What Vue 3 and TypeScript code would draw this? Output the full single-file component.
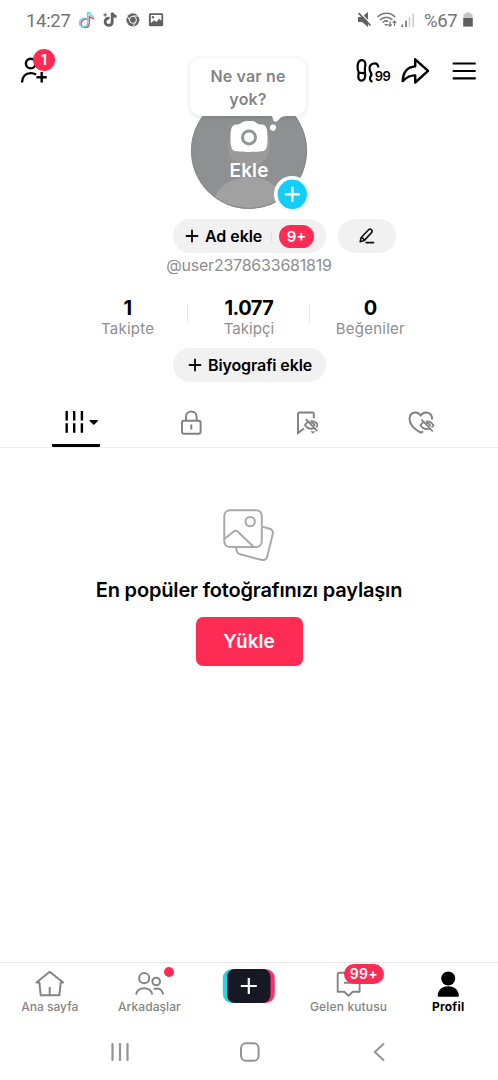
<script setup lang="ts">
interface Stat { value: string; label: string; tracking: string }

const stats: Stat[] = [
  { value: '1', label: 'Takipte', tracking: '0.25px' },
  { value: '1.077', label: 'Takipçi', tracking: '0.05px' },
  { value: '0', label: 'Beğeniler', tracking: '0.25px' },
]
</script>

<template>
  <main class="screen">
    <header class="status">
      <span class="clock">14:27</span>
      <svg class="status-apps" width="86" height="20" viewBox="79 10 86 20">
        <g fill="none" stroke-width="1.500">
          <path d="M86.500 18.200c-7-.4-8.200 8.600-2 8.600 2.900 0 4.200-2 4.200-4.500v-6.500c1.400 1.300 2.800 1.900 4.800 2" stroke="#e8506d" transform="translate(.6 .8)" />
          <path d="M85.500 18.200c-7-.4-8.200 8.600-2 8.600 2.900 0 4.200-2 4.200-4.500V12.700h2c.3 2.200 1.700 3.600 4.100 3.800" stroke="#5edbe0" />
        </g>
        <path d="M109.500 18.200c-5.600-.5-5.800 7.200-.8 7.200 2.400 0 3.500-1.500 3.500-3.700v-8.900c.5 2.500 1.900 3.700 4.300 3.900" fill="none" stroke="#606060" stroke-width="2.800" />
        <path d="M105.200 12.300l.7 1.900 1.900.7-1.900.7-.7 1.900-.7-1.900-1.900-.7 1.900-.7z" fill="#606060" />
        <circle cx="132.900" cy="19.800" r="6.600" fill="#666" />
        <path d="M127.200 16.400l3.200 5M133 16h6M136.200 21.500l-3.300 5.200" stroke="#fff" stroke-width=".9" />
        <circle cx="132.900" cy="19.800" r="3.500" fill="#666" stroke="#fff" stroke-width=".9" />
        <path fill-rule="evenodd" d="M150.400 13.200h11.300c.9 0 1.500.6 1.500 1.500v10c0 .9-.6 1.500-1.500 1.500h-11.300c-.9 0-1.500-.6-1.500-1.500v-10c0-.9.6-1.500 1.500-1.500zM150.800 15v8.200l3.300-3 2.300 1.800 2.700-3.300 2.300 2V15z" fill="#606060" />
        <circle cx="153" cy="17.200" r="1.200" fill="#606060" />
      </svg>
      <svg class="status-signal" width="59" height="20" viewBox="357 10 59 20">
        <path d="M358 17h4l6-5v15l-6-5h-4z" fill="#606060" />
        <path d="M359.500 12l12.500 13" stroke="#fff" stroke-width="1.200" />
        <path d="M358.500 13l12 12.500" stroke="#606060" stroke-width="1.800" />
        <g fill="none" stroke="#777" stroke-width="1.600">
          <path d="M377.500 17c5-5 13-5 17.500 0M380 20c4-3.700 9-3.700 12.500 0M382.700 22.500c1.800-1.800 3.600-2 5.300-1" />
          <path d="M390 21.200v5m-1.800-1.700 1.800 1.700 1.800-1.700M394.500 26v-5m-1.800 1.700 1.800-1.700 1.800 1.700" stroke-width="1.200" />
        </g>
        <path d="M384.200 24h4l-2 2.200z" fill="#777" />
        <path d="M402.200 24.500V27M406 20.500V27" stroke="#666" stroke-width="1.500" />
        <path d="M409.500 17V27M413.200 13.500V27" stroke="#ccc" stroke-width="1.500" />
      </svg>
      <span class="percent">%67</span>
      <svg width="10" height="16" viewBox="0 0 10 16"><path d="M2.800 1.700V.5h4.400v1.200H9.500V6h-9V1.700z" fill="#c5c5c5" /><path d="M.2 6h9.600v8.600H.2z" fill="#606060" /></svg>
    </header>

    <section class="hero">
      <button class="friends" aria-label="Arkadaş ekle">
        <svg width="30" height="30" viewBox="20 56 30 30" fill="none" stroke="#000" stroke-width="2.400">
          <circle cx="30.700" cy="63.600" r="4.800" />
          <path d="M22 82.500c.3-6 3.700-9.400 8.700-9.400 2 0 3.800.5 5.400 1.500M36.500 77.200h10.200M41.700 72v10.400" />
        </svg>
        <span class="count">1</span>
      </button>

      <div class="avatar">
        <svg width="118" height="118" viewBox="190 92 118 118">
          <defs><clipPath id="face"><circle cx="249" cy="150.800" r="58" /></clipPath></defs>
          <g clip-path="url(#face)">
            <path d="M190 92h118v118H190z" fill="#8e9092" />
            <circle cx="249" cy="146" r="21" fill="#9b9b9b" />
            <ellipse cx="249" cy="208" rx="37" ry="31" fill="#a1a1a1" />
          </g>
          <circle cx="249" cy="150.800" r="57.600" fill="none" stroke="#87898b" />
          <path d="M236 124.500c3.200 0 4.200-.6 5.700-1.800 1.500-1.200 3-1.700 7.300-1.700s5.800.5 7.300 1.700 2.500 1.800 5.700 1.800c3.700.4 5.500 3 5.500 12.500 0 8.500-.5 13-4.300 14-5 1.200-23.400 1.200-28.400 0-3.800-1-4.300-5.500-4.300-14 0-9.500 1.800-12.100 5.500-12.500z" fill="#fff" />
          <circle cx="249" cy="137.400" r="6.500" fill="#fff" stroke="#929496" stroke-width="3" />
        </svg>
        <span class="ekle">Ekle</span>
        <div class="bubble">Ne var ne<br>yok?</div>
        <svg class="tail" width="20" height="18" viewBox="268 114 20 18" fill="#fff"><path d="M269 114h18v2c-4 .3-6 .8-8 3.300-1.800 2.900-4.700 3-5.700 1-.7-2-.3-3.300-2.300-4.300z" /><circle cx="273" cy="127.600" r="3.100" /></svg>
        <svg class="plus" width="36" height="36" viewBox="0 0 36 36"><circle cx="18" cy="18" r="18" fill="#fff" /><circle cx="18.300" cy="18.300" r="14.700" fill="#13cef8" /><path d="M10.800 18.300h15M18.300 10.800v15" stroke="#fff" stroke-width="2.400" /></svg>
      </div>

      <svg class="actions" width="124" height="32" viewBox="354 56 124 32" fill="none" stroke="#000" stroke-width="2.200">
        <path d="M362 60.200c2.800.1 3.900 2.700 3.200 6-.8 3.300-.3 5 0 8.200.3 4-1.300 6.300-3.900 6.200-2.500-.1-3.200-2.300-2.900-5.200l.3-3c-1.100-2.300-1.400-4.500-1-7.200.5-3.400 1.900-5.100 4.300-5zM358.500 72.600l6.500.8" />
        <path d="M378.300 67.500c0-2.800-1.600-4.300-4.200-4-3.800.4-5.200 3.200-4.400 6.500.6 2.400 2 3.200 1.700 5-.2 1.300-1.400 1.500-1.400 3 0 2.200.7 3.600 2.600 3.500" />
        <text x="374.800" y="81" class="views">99</text>
        <path d="M415.200 59.300l12.900 11.600-12.900 11.600v-7.100c-5.100-.2-8.400 1.500-12.500 5.700.4-8.600 4.300-14.100 12.500-14.700z" stroke-width="2.400" stroke-linejoin="round" />
        <path d="M452.700 63.500h23M452.700 71h23M452.700 78.300h23" stroke-width="2.200" />
      </svg>
    </section>

    <section class="name-row">
      <button class="pill name-pill">
        <svg width="14" height="14" viewBox="0 0 14 14" stroke="#111" stroke-width="1.900"><path d="M.8 7h12.400M7 .8v12.400" /></svg>
        <span class="add-name">Ad ekle</span>
        <i class="split"></i>
        <span class="nine">9+</span>
      </button>
      <button class="pill edit-pill" aria-label="Düzenle">
        <svg width="18" height="18" viewBox="0 0 18 18" fill="none" stroke="#111" stroke-width="1.600" stroke-linejoin="round"><path d="M2.200 14.800l.8-4 7.600-8c1.800-1.800 4.700.7 2.900 2.800l-7.300 8zM3.200 10.700c1.500 0 2.600 1.200 2.800 2.700M7.500 15.600h8.700" /></svg>
      </button>
    </section>
    <p class="handle">@user2378633681819</p>

    <section class="stats">
      <div v-for="s in stats" :key="s.label" class="stat">
        <strong>{{ s.value }}</strong>
        <span :style="{ letterSpacing: s.tracking }">{{ s.label }}</span>
      </div>
    </section>

    <button class="pill bio">
      <svg width="14" height="14" viewBox="0 0 14 14" stroke="#111" stroke-width="1.900"><path d="M.8 7h12.400M7 .8v12.400" /></svg>
      <span>Biyografi ekle</span>
    </button>

    <nav class="tabs">
      <div class="tab active">
        <svg width="36" height="24" viewBox="64 411 36 24"><path d="M66.700 412v9.500M74.200 412v9.500M81.900 412v9.500M66.700 424.200v9.500M74.200 424.200v9.500M81.900 424.200v9.500" stroke="#000" stroke-width="2.400" /><path d="M89.600 421h8.300v1l-4.100 4-4.200-4z" fill="#000" /></svg>
      </div>
      <div class="tab">
        <svg width="22" height="26" viewBox="180 410 22 26" fill="none" stroke="#808080" stroke-width="1.900"><rect x="182" y="420.700" width="18.600" height="13" rx="2" /><path d="M186 420.500v-3.800c0-7 10.600-7 10.600 0v3.800M191.300 424.500v5" /></svg>
      </div>
      <div class="tab">
        <svg width="24" height="26" viewBox="294.500 410 24 26" fill="none" stroke="#808080" stroke-width="1.900">
          <path d="M304.500 428.500l-6 4.500V414c0-1 .5-1.500 1.500-1.500h13c.8 0 1.300.5 1.300 1.300v4.500" />
          <path d="M310.800 431.300h5l-2.300 2.500z" fill="#808080" stroke="none" />
          <path d="M305.500 425c3-5.200 9.600-5.200 13 0-3.400 5-10 5-13 0z" stroke-width="1.800" />
          <path d="M308 418.500l11 12" stroke="#fff" stroke-width="1.100" />
          <path d="M306.300 419.200l11.500 12M311 422c2.800.8 3.800 2 4.300 4" stroke-width="1.800" />
        </svg>
      </div>
      <div class="tab">
        <svg width="28" height="26" viewBox="407.300 410 28 26" fill="none" stroke="#808080" stroke-width="1.900">
          <path d="M432.400 419.500c.2-7.500-7.900-9.200-11.400-4-4-5.500-11.200-3-11.200 3.500 0 5.300 5.200 10.300 11.200 13.700 1-.4 1.700-.8 2.500-1.300" />
          <path d="M420.800 425.300c3-5.200 9.600-5.200 13 0-3.400 5-10 5-13 0z" stroke-width="1.800" />
          <path d="M423.300 418.800l11 12" stroke="#fff" stroke-width="1.100" />
          <path d="M421.600 419.500l11.500 12M426.300 422.300c2.800.8 3.800 2 4.300 4" stroke-width="1.800" />
        </svg>
      </div>
    </nav>

    <section class="empty">
      <svg width="54" height="56" viewBox="222 507 54 56" fill="none" stroke="#aaa" stroke-width="2" stroke-linejoin="round">
        <rect x="224.300" y="510.300" width="37.500" height="36.700" rx="5.500" /><circle cx="250.200" cy="521.600" r="4.700" />
        <path d="M225 538.500l8.300-6.800c1.600-1.400 3-1.400 4.600.1l15.600 15M262.500 526.800l6.400 1.700c3.200.9 4.600 2.800 3.700 6l-5.100 21.200c-.8 3.400-2.900 5-6.300 4.100L241 554.500c-3.500-.9-5.200-2.800-4.800-7" />
      </svg>
      <h1>En popüler fotoğrafınızı paylaşın</h1>
      <button class="upload">Yükle</button>
    </section>

    <nav class="bottom">
      <div class="item">
        <svg width="30" height="28" viewBox="35 970 30 28" fill="none" stroke="#858585" stroke-width="2" stroke-linejoin="round"><path d="M36.500 982.500L49.700 971.700l13.500 10.800h-2.500l-1.300 12.800H40.700l-1.300-12.800zM49.700 987v8" /></svg>
        <span>Ana sayfa</span>
      </div>
      <div class="item">
        <svg width="30" height="28" viewBox="134.300 970 30 28" fill="none" stroke="#858585" stroke-width="2"><circle cx="144.500" cy="978.200" r="5.100" /><circle cx="156.500" cy="981.500" r="3.800" /><path d="M136.300 994.500c2-8.300 14.300-8.300 16.400 0M154 989.200c4.500-2 8.700.2 9.500 5.300" /></svg>
        <i class="dot"></i>
        <span class="friends-label">Arkadaşlar</span>
      </div>
      <div class="item create">
        <svg width="54" height="36" viewBox="222 968 54 36"><rect x="222.800" y="969" width="44" height="34" rx="9" fill="#24d5e7" /><rect x="231" y="969" width="43.800" height="34" rx="9" fill="#f8316c" /><rect x="227" y="969" width="43.500" height="34" rx="8" fill="#161823" /><path d="M240.800 986h16M248.800 978v16" stroke="#fff" stroke-width="2.200" /></svg>
      </div>
      <div class="item">
        <svg width="30" height="28" viewBox="334 970 30 28" fill="none" stroke="#858585" stroke-width="1.900" stroke-linejoin="round"><path d="M350 972.700h-11c-1 0-1.300.4-1.300 1.300v17.700h6.500l4.300 4 4.300-4h6.800v-10M344 982.700h9" /></svg>
        <span class="inbox-count">99+</span>
        <span class="inbox-label">Gelen kutusu</span>
      </div>
      <div class="item selected">
        <svg width="30" height="28" viewBox="433 970 30 28"><circle cx="448.200" cy="978.500" r="7" /><path d="M437.700 995c1.100-6 5-8.700 10.500-8.700s9.500 2.700 10.600 8.700c.2 1.100-.3 1.800-1.500 1.800h-18.100c-1.200 0-1.700-.7-1.500-1.800z" /></svg>
        <span class="profile-label">Profil</span>
      </div>
    </nav>
    <footer class="system">
      <svg width="20" height="20" viewBox="0 0 20 20" stroke="#939393" stroke-width="2.200" stroke-linecap="round"><path d="M2.500 2v16M10 2v16M17.500 2v16" /></svg>
      <svg width="20" height="20" viewBox="0 0 20 20" fill="none" stroke="#939393" stroke-width="2"><rect x="1" y="1.200" width="17.600" height="17.600" rx="5" /></svg>
      <svg width="20" height="20" viewBox="0 0 20 20" fill="none" stroke="#939393" stroke-width="2" stroke-linecap="round"><path d="M14.500 2L5.800 10l8.700 8" /></svg>
    </footer>
  </main>
</template>

<style>
body { margin: 0; background: #fff; }
</style>

<style scoped>
.screen { width: 498px; height: 1080px; display: flex; flex-direction: column; overflow: hidden; background: #fff; color: #000; font-family: Inter, "Noto Sans", sans-serif; }
.screen * { box-sizing: border-box; }
svg { display: block; flex: none; }
button { border: 0; padding: 0; margin: 0; background: none; font: inherit; color: inherit; }
.status { height: 40px; flex: none; display: flex; align-items: center; padding-left: 26px; font: 18.5px Roboto, sans-serif; color: #747474; }
.clock { width: 53px; letter-spacing: -.3px; padding-top: 1px; }
.status-signal { margin-left: 192px; }
.percent { width: 47px; padding: 1px 0 0 8px; letter-spacing: -.3px; flex: none; }
.hero { height: 178px; flex: none; display: grid; grid-template-columns: 190px 118px 1fr; }
.friends { position: relative; width: 30px; height: 30px; margin: 16px 0 0 20px; }
.count { position: absolute; left: 13px; top: -7px; width: 22px; height: 22px; border-radius: 50%; background: #fe2c55; color: #fff; font-size: 14px; line-height: 22px; font-weight: 600; text-align: center; }
.avatar { position: relative; padding-top: 52px; }
.ekle { position: absolute; left: 0; top: 119px; width: 118px; text-align: center; color: #fff; font-weight: 600; font-size: 19px; line-height: 24px; letter-spacing: .1px; }
.bubble { position: absolute; left: 0; top: 18px; width: 116px; height: 58px; padding-top: 7px; border-radius: 11px; background: #fff; color: #858585; text-align: center; font-weight: 600; font-size: 16px; line-height: 22.5px; letter-spacing: .15px; box-shadow: 0 1px 5px rgba(0, 0, 0, .13); }
.tail { position: absolute; left: 78px; top: 74px; }
.plus { position: absolute; left: 84px; top: 136px; }
.actions { margin: 16px 0 0 46px; }
.views { font: 600 13px Inter, sans-serif; fill: #000; stroke: none; letter-spacing: -.5px; }
.name-row { height: 35px; flex: none; display: flex; gap: 12px; padding: 1px 0 0 172.5px; }
.pill { background: #f1f1f1; border-radius: 18px; display: flex; align-items: center; }
.name-pill { width: 153px; height: 34px; padding-left: 12px; }
.add-name { width: 66px; margin-left: 6.5px; text-align: left; font-weight: 600; font-size: 16px; letter-spacing: -.05px; white-space: nowrap; }
.split { width: 1px; height: 11px; background: #e0e0e0; }
.nine { margin-left: 7px; width: 35px; height: 23px; border-radius: 12px; background: #fe2c55; color: #fff; font-size: 15px; line-height: 23px; font-weight: 600; text-align: center; }
.edit-pill { width: 58px; height: 34px; justify-content: center; }
.handle { height: 24px; margin: 0; flex: none; text-align: center; color: #8e8e8e; font-size: 16px; line-height: 24px; letter-spacing: -.22px; }
.stats { height: 71px; flex: none; display: flex; padding: 20px 67px 0 67px; }
.stat { flex: 1; height: 43px; display: flex; flex-direction: column; align-items: center; position: relative; }
.stat strong { font-size: 20px; line-height: 23px; font-weight: 700; letter-spacing: -.5px; }
.stat span { font-size: 15px; line-height: 18px; color: #8e8e8e; }
.stat + .stat::before { content: ""; position: absolute; left: -1px; top: 7px; width: 1px; height: 19px; background: #e9e9e9; }
.bio { width: 153px; height: 34px; flex: none; align-self: flex-start; margin-left: 172.5px; padding-left: 15px; gap: 6.5px; font-size: 16px; font-weight: 600; letter-spacing: -.12px; white-space: nowrap; }
.tabs { height: 66px; flex: none; display: grid; grid-template-columns: repeat(4, 115px); padding: 25px 0 0 18.5px; border-bottom: 1px solid #ededed; }
.tab { display: flex; justify-content: center; padding-top: 3px; }
.active { width: 48px; justify-self: center; border-bottom: 3px solid #000; border-radius: 1px; padding-left: 12px; justify-content: flex-start; }
.empty { flex: 1; display: flex; flex-direction: column; align-items: center; padding-top: 59px; }
h1 { margin: 12px 0 0; font-size: 20px; line-height: 30px; font-weight: 600; letter-spacing: -.17px; white-space: nowrap; }
.upload { width: 107px; height: 49px; margin: 12px 0 0; border-radius: 7px; background: #fe2c55; color: #fff; font-size: 19px; font-weight: 600; }
.bottom { height: 62px; flex: none; border-top: 1px solid #e7e7e7; display: grid; grid-template-columns: repeat(5, 1fr); }
.item { position: relative; display: flex; flex-direction: column; align-items: center; padding-top: 7px; color: #858585; font-size: 12px; line-height: 16px; font-weight: 500; white-space: nowrap; }
.item > span:not(.inbox-count) { margin-top: 1px; }
.create { padding-top: 5px; }
.selected { color: #000; font-weight: 700; }
.dot { position: absolute; left: 64px; top: 4px; width: 10px; height: 10px; background: #fe2c55; border-radius: 50%; }
.inbox-count { position: absolute; left: 45px; top: 1px; width: 40px; height: 20px; border-radius: 10px; background: #fe2c55; color: #fff; text-align: center; font-size: 14px; line-height: 20px; font-weight: 600; letter-spacing: .2px; }
.inbox-label { letter-spacing: .15px; }
.friends-label { letter-spacing: .08px; }
.profile-label { letter-spacing: .2px; }
.system { height: 56px; flex: none; display: flex; justify-content: space-between; align-items: center; padding: 0 109px 0 110px; }
</style>
